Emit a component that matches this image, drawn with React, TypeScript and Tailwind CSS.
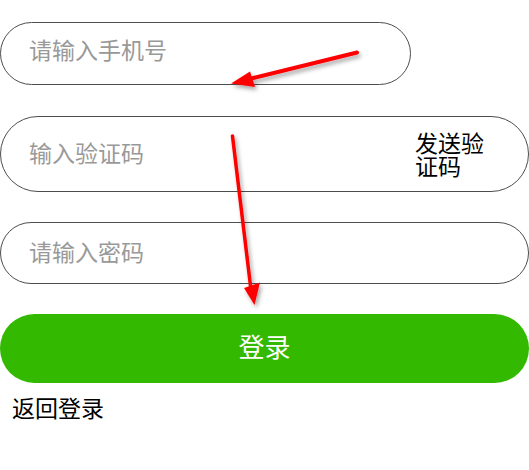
import React from "react";

export default function App() {
  const font = { fontFamily: '"Noto Sans CJK SC", "Noto Sans", sans-serif' };
  return (
    <div className="relative w-[529px] h-[470px] overflow-hidden bg-white" style={font}>
      <div className="flex flex-col pt-[22px]">
        <div className="w-[411px] h-[63px] box-border rounded-full border border-[#4d4d4d] flex items-center pl-[28px] pb-[8px]">
          <input
            className="w-full bg-transparent outline-none text-[23px] text-black placeholder:text-[#999]"
            placeholder="请输入手机号"
          />
        </div>
        <div className="mt-[31px] w-[529px] h-[76px] box-border rounded-full border border-[#4d4d4d] flex items-center pl-[28px]">
          <input
            className="flex-1 min-w-0 bg-transparent outline-none text-[23px] text-black placeholder:text-[#999] mb-[4px]"
            placeholder="输入验证码"
          />
          <button className="w-[72px] mr-[41px] text-left text-[23px] leading-[23px] text-black">
            发送验证码
          </button>
        </div>
        <div className="mt-[30px] w-[529px] h-[62px] box-border rounded-full border border-[#4d4d4d] flex items-center pl-[28px] pb-[4px]">
          <input
            type="password"
            className="w-full bg-transparent outline-none text-[23px] text-black placeholder:text-[#999]"
            placeholder="请输入密码"
          />
        </div>
        <button className="mt-[30px] w-[529px] h-[69px] rounded-full bg-[#33b900] text-white text-[26px] flex items-center justify-center pb-[6px]">
          登录
        </button>
        <div className="mt-[9px] pl-[12px] text-[23px] leading-[30px] text-black">返回登录</div>
      </div>
      <svg className="absolute inset-0 pointer-events-none" width="529" height="470" viewBox="0 0 529 470">
        <defs>
          <filter id="sh" x="-20%" y="-20%" width="140%" height="140%">
            <feDropShadow dx="2" dy="3" stdDeviation="2" floodColor="#000" floodOpacity="0.35" />
          </filter>
        </defs>
        <g filter="url(#sh)" fill="#ff0000" stroke="#ff0000" strokeLinecap="round">
          <line x1="357" y1="52.5" x2="245" y2="80" strokeWidth="4" />
          <polygon points="231,83.5 250,71.5 255,87" stroke="none" />
          <line x1="232.5" y1="136" x2="251" y2="290" strokeWidth="3.5" />
          <polygon points="254.5,305 244,288 260,282.5" stroke="none" />
        </g>
      </svg>
    </div>
  );
}
